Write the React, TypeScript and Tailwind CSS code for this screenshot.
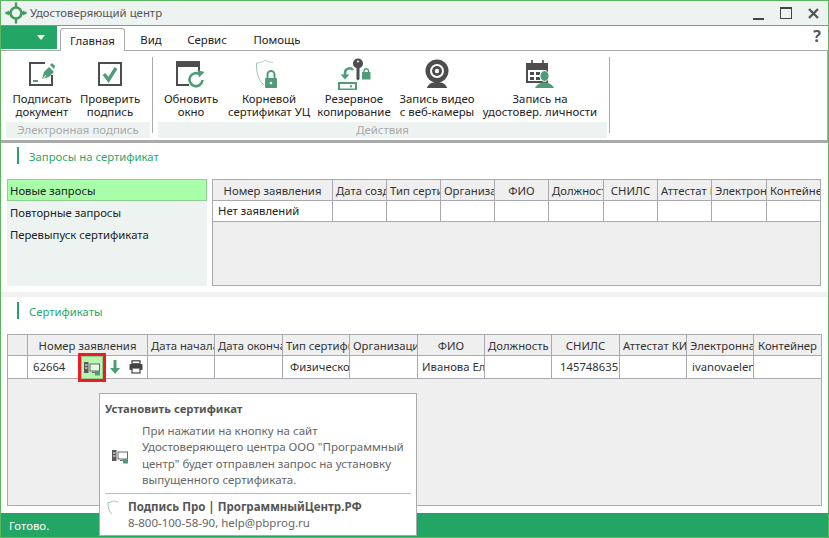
import React from "react";

const G = "#4f9d78";
const D = "#4d4d4d";

function Logo() {
  return (
    <svg width="22" height="22" viewBox="0 0 22 22" fill="none">
      <circle cx="11" cy="11" r="5.5" stroke="#3f9c5c" strokeWidth="2.6" />
      <path d="M11 0.5V6M11 16V21.5M0.5 11H6M16 11H21.5" stroke="#3f9c5c" strokeWidth="2.4" />
      <path d="M0.5 11L4 8.5V13.5ZM21.5 11L18 8.5V13.5Z" fill="#3f9c5c" />
    </svg>
  );
}
function SignIcon() {
  return (
    <svg width="28" height="26" viewBox="0 0 28 26" fill="none">
      <path d="M17 2H2V24H24V14" stroke={D} strokeWidth="2" />
      <path d="M5 20H10" stroke={G} strokeWidth="2" />
      <path d="M14 18L16 11L21 6L26 11L21 16Z" fill={G} />
      <path d="M14 19L18 14" stroke="#fff" strokeWidth="1" />
      <path d="M22 4L24 2L27 5L26 8Z" fill={G} />
    </svg>
  );
}
function CheckIcon() {
  return (
    <svg width="26" height="26" viewBox="0 0 26 26" fill="none">
      <rect x="2" y="2" width="22" height="22" stroke={D} strokeWidth="2" />
      <path d="M7 13L11.5 19L19 7" stroke={G} strokeWidth="3.4" />
    </svg>
  );
}
function RefreshIcon() {
  return (
    <svg width="32" height="28" viewBox="0 0 32 28" fill="none">
      <rect x="1" y="1" width="24" height="6" fill={D} />
      <path d="M2 7V25H14M24 7V11" stroke={D} strokeWidth="2" />
      <path d="M27.5 20A6.5 6.5 0 1 1 25 14.5" stroke={G} strokeWidth="2.6" />
      <path d="M22.5 10L29.5 12L24 17.5Z" fill={G} />
    </svg>
  );
}
function ShieldIcon() {
  return (
    <svg width="28" height="30" viewBox="0 0 28 30" fill="none">
      <path d="M1.5 4C5 4 8 3 10 0.8C12 2.5 15 3.5 18 3.5" stroke="#9dc8b4" strokeWidth="0.8" />
      <path d="M1.5 4C1 12 3 21 9 26" stroke="#8fbfa8" strokeWidth="0.9" />
      <path d="M12.5 19V15.5A3.5 3.5 0 0 1 19.5 15.5V19" stroke={G} strokeWidth="2" />
      <rect x="10" y="19" width="12" height="10" rx="1" fill={G} />
      <circle cx="16" cy="24" r="1.3" fill="#fff" />
    </svg>
  );
}
function BackupIcon() {
  return (
    <svg width="34" height="32" viewBox="0 0 34 32" fill="none">
      <circle cx="21" cy="5.5" r="5" fill={D} />
      <circle cx="21" cy="3.5" r="1" fill="#fff" />
      <path d="M19.5 10H22.5V21L21 22.5L19.5 21Z" fill={D} />
      <path d="M27 14V12.5A2.3 2.3 0 0 1 31.5 12.5V14" stroke={G} strokeWidth="1.4" />
      <rect x="25" y="14" width="8.5" height="7.5" fill={G} />
      <path d="M8 18V15A4.5 4.5 0 0 1 16 12" stroke={G} strokeWidth="2.6" />
      <path d="M3.5 16.5H12.5L8 21.5Z" fill={G} />
      <rect x="2" y="25" width="17" height="6.5" stroke={G} strokeWidth="2" />
      <rect x="13" y="27.3" width="2" height="2" fill={G} />
    </svg>
  );
}
function CamIcon() {
  return (
    <svg width="26" height="30" viewBox="0 0 26 30" fill="none">
      <circle cx="13" cy="12" r="11.5" fill={D} />
      <circle cx="13" cy="12" r="7" fill="#fff" />
      <circle cx="13" cy="12" r="5" fill={D} />
      <circle cx="13" cy="12" r="2.2" fill="#fff" />
      <path d="M3 29C4 25 8 23 13 23C18 23 22 25 23 29Z" fill={D} />
    </svg>
  );
}
function CalIcon() {
  return (
    <svg width="30" height="30" viewBox="0 0 30 30" fill="none">
      <path d="M7 1V8M18 1V8" stroke={D} strokeWidth="1.6" />
      <rect x="1" y="4" width="22" height="20" fill={D} />
      <rect x="3" y="11" width="18" height="11" fill="#fff" />
      <path d="M5 13H9V16H5ZM11 13H15V16H11ZM5 18H9V21H5ZM11 18H15V21H11Z" fill={D} />
      <ellipse cx="19.5" cy="17" rx="4.6" ry="5.4" fill={G} stroke="#fff" strokeWidth="1" />
      <path d="M10 29C12 25 16 23.5 19.5 23.5C23 23.5 27 25 29 29Z" fill={G} />
    </svg>
  );
}
function InstallIcon({ small }: { small?: boolean }) {
  return (
    <svg width="18" height="16" viewBox="0 0 18 16" fill="none">
      <rect x="1" y="2" width="4.5" height="11" fill="#5a5a5a" />
      <path d="M2 5H4.5M2 8H4.5" stroke="#fff" strokeWidth="1" />
      <rect x="7" y="4" width="9.5" height="7" stroke="#666" strokeWidth="1" fill={small ? "#fff" : "#e8f8e8"} />
      <path d="M9 12.5H14" stroke="#666" strokeWidth="1" />
      <rect x="12" y="11" width="5" height="4.5" fill={G} />
    </svg>
  );
}
function DownIcon() {
  return (
    <svg width="12" height="16" viewBox="0 0 12 16" fill="none">
      <path d="M4.5 1H7.5V9H11L6 15L1 9H4.5Z" fill={G} />
    </svg>
  );
}
function PrinterIcon() {
  return (
    <svg width="14" height="14" viewBox="0 0 14 14" fill="none">
      <rect x="3" y="0.8" width="8" height="3" stroke="#444" strokeWidth="1.2" />
      <rect x="0.5" y="4" width="13" height="6" rx="1" fill="#444" />
      <rect x="3" y="8" width="8" height="5" fill="#fff" stroke="#444" strokeWidth="1.2" />
    </svg>
  );
}
function SmallShield() {
  return (
    <svg width="12" height="15" viewBox="0 0 12 15" fill="none">
      <path d="M1 2.5C3 2.5 5 2 6.5 0.7C8 1.6 9.5 2 11 2" stroke="#8fc4ab" strokeWidth="0.9" />
      <path d="M1 2.5C0.8 7 2 11.5 5 14" stroke="#8fc4ab" strokeWidth="0.9" />
    </svg>
  );
}

function RibbonBtn({ w, icon, a, b }: { w: string; icon: React.ReactNode; a: string; b: string }) {
  return (
    <div className={`${w} flex flex-col items-center shrink-0`}>
      <div className="h-[33px] flex items-center justify-center">{icon}</div>
      <div className="text-[11.4px] leading-[13px] text-[#222] text-center whitespace-nowrap mt-[2px]">
        <div>{a}</div>
        <div>{b}</div>
      </div>
    </div>
  );
}

type Col = { w: number; t?: string; left?: boolean; pad?: number };

const reqCols: Col[] = [
  { w: 120, t: "Номер заявления" },
  { w: 54, t: "Дата создания", left: true },
  { w: 54, t: "Тип сертификата", left: true },
  { w: 54, t: "Организация", left: true },
  { w: 54, t: "ФИО" },
  { w: 55, t: "Должность", left: true },
  { w: 54, t: "СНИЛС" },
  { w: 54, t: "Аттестат КИ", left: true },
  { w: 55, t: "Электронная почта", left: true },
  { w: 54, t: "Контейнер", left: true },
];

const certCols: Col[] = [
  { w: 20, pad: 4 },
  { w: 120, t: "Номер заявления", pad: 5 },
  { w: 67, t: "Дата начала действия", left: true, pad: 4 },
  { w: 68, t: "Дата окончания", left: true, pad: 4 },
  { w: 67, t: "Тип сертификата", left: true, pad: 7 },
  { w: 68, t: "Организация", left: true, pad: 4 },
  { w: 67, t: "ФИО", pad: 4 },
  { w: 67, t: "Должность", left: true, pad: 4 },
  { w: 68, t: "СНИЛС", pad: 8 },
  { w: 67, t: "Аттестат КИ", left: true, pad: 4 },
  { w: 67, t: "Электронная почта", left: true, pad: 5 },
  { w: 68, t: "Контейнер", pad: 4 },
];

function Header({ cols }: { cols: Col[] }) {
  return (
    <div className="flex h-[21px] border-b border-[#aaa9b0] shrink-0">
      {cols.map((c, i) => (
        <div
          key={i}
          style={{ width: c.w }}
          className={`shrink-0 overflow-hidden whitespace-nowrap text-[11.3px] leading-[21px] text-[#333] border-r border-[#aaa9b0] bg-[#efefef] ${
            c.left ? "pl-[3px] text-left" : "text-center"
          }`}
        >
          {c.t}
        </div>
      ))}
    </div>
  );
}

const certRow = ["", "62664", "", "", "Физическое лицо", "", "Иванова Елена", "", "145748635", "", "ivanovaelena", ""];

export default function App() {
  return (
    <div className="relative w-[829px] h-[538px] overflow-hidden bg-white border-x border-[#5cb660] font-['Noto_Sans','Open_Sans',sans-serif] flex flex-col">
      {/* Title bar */}
      <div className="h-[26px] shrink-0 bg-[#edf3f1] border-y border-[#5cb660] flex items-center pl-[4px] pr-[9px]">
        <Logo />
        <span className="ml-[3px] text-[11.4px] text-[#555]">Удостоверяющий центр</span>
        <div className="ml-auto flex items-center">
          <div className="w-[11px] h-[2px] bg-[#444] mt-[11px]" />
          <div className="w-[12px] h-[12px] border border-[#444] border-t-2 ml-[16px] -mt-[1px]" />
          <svg className="ml-[16px]" width="11" height="11" viewBox="0 0 11 11" fill="none">
            <path d="M1 1L10 10M10 1L1 10" stroke="#555" strokeWidth="2.4" />
          </svg>
        </div>
      </div>
      {/* Tabs */}
      <div className="h-[25px] shrink-0 flex items-end relative border-b border-[#aaa] bg-white">
        <div className="w-[56px] h-[23px] self-start bg-[#22a565] flex items-center justify-end pr-[12px]">
          <div className="w-0 h-0 border-x-[4px] border-x-transparent border-t-[5px] border-t-white" />
        </div>
        <div className="ml-[3px] w-[65px] h-[23px] -mb-px bg-white border border-b-0 border-[#aaa] rounded-t-[3px] text-center text-[11.4px] leading-[24px] text-[#222]">
          Главная
        </div>
        <div className="w-[52px] h-[22px] text-center text-[11.4px] leading-[23px] text-[#222]">Вид</div>
        <div className="w-[60px] h-[22px] text-center text-[11.4px] leading-[23px] text-[#222]">Сервис</div>
        <div className="w-[80px] h-[22px] text-center text-[11.4px] leading-[23px] text-[#222]">Помощь</div>
        <div className="ml-auto mr-[7px] mb-[4px] self-center text-[16px] font-bold leading-none text-[#555]">?</div>
      </div>
      {/* Ribbon */}
      <div className="h-[92px] shrink-0 border-b-[3px] border-[#aaa] border-r border-r-[#aaa] flex pl-[5px] pt-[6px] bg-white">
        <div className="w-[144px] shrink-0 flex flex-col">
          <div className="flex h-[65px]">
            <RibbonBtn w="w-[72px]" icon={<SignIcon />} a="Подписать" b="документ" />
            <RibbonBtn w="w-[64px]" icon={<CheckIcon />} a="Проверить" b="подпись" />
          </div>
          <div className="h-[16px] bg-[#edf3f1] text-center text-[11.4px] leading-[16px] text-[#aaa]">Электронная подпись</div>
        </div>
        <div className="w-px h-[76px] ml-[2px] bg-[#aaa]" />
        <div className="w-[449px] ml-[5px] shrink-0 flex flex-col">
          <div className="flex h-[65px]">
            <RibbonBtn w="w-[66px]" icon={<RefreshIcon />} a="Обновить" b="окно" />
            <RibbonBtn w="w-[90px]" icon={<ShieldIcon />} a="Корневой" b="сертификат УЦ" />
            <RibbonBtn w="w-[80px]" icon={<BackupIcon />} a="Резервное" b="копирование" />
            <RibbonBtn w="w-[86px]" icon={<CamIcon />} a="Запись видео" b="с веб-камеры" />
            <RibbonBtn w="w-[120px]" icon={<CalIcon />} a="Запись на" b="удостовер. личности" />
          </div>
          <div className="h-[16px] bg-[#edf3f1] text-center text-[11.4px] leading-[16px] text-[#aaa]">Действия</div>
        </div>
        <div className="w-px h-[76px] ml-[2px] bg-[#aaa]" />
      </div>
      {/* Requests section */}
      <div className="h-[149px] shrink-0 flex flex-col bg-white">
        <div className="h-[36px] shrink-0 pl-[16px] pt-[4px] flex items-start">
          <div className="w-[2px] h-[17px] bg-[#22a565]" />
          <div className="ml-[10px] text-[11.3px] leading-[20px] text-[#2aa76a]">Запросы на сертификат</div>
        </div>
        <div className="flex pl-[6px]">
          <div className="w-[200px] h-[107px] bg-[#edf3f1] text-[11.3px] text-[#222]">
            <div className="h-[22px] bg-[#a9ffa9] border border-[#8fd08f] pl-[2px] leading-[21px]">Новые запросы</div>
            <div className="h-[22px] pl-[3px] leading-[23px]">Повторные запросы</div>
            <div className="h-[22px] pl-[3px] leading-[23px]">Перевыпуск сертификата</div>
          </div>
          <div className="ml-[5px] w-[609px] h-[107px] bg-[#efefef] border border-[#aaa9b0]">
            <Header cols={reqCols} />
            <div className="flex h-[21px] border-b border-[#aaa9b0] bg-white w-full">
              {reqCols.map((c, i) => (
                <div
                  key={i}
                  style={{ width: c.w }}
                  className="shrink-0 overflow-hidden whitespace-nowrap border-r border-[#aaa9b0] pl-[5px] text-[11.3px] leading-[20px] text-[#222]"
                >
                  {i === 0 ? "Нет заявлений" : ""}
                </div>
              ))}
            </div>
          </div>
        </div>
      </div>
      <div className="h-[5px] shrink-0 bg-[#f1f1f1]" />
      {/* Certificates */}
      <div className="flex-1 flex flex-col bg-white">
        <div className="h-[37px] shrink-0 pl-[16px] pt-[5px] flex items-start">
          <div className="w-[2px] h-[17px] bg-[#22a565]" />
          <div className="ml-[10px] text-[11.3px] leading-[20px] text-[#2aa76a]">Сертификаты</div>
        </div>
        <div className="ml-[6px] w-[815px] h-[172px] bg-[#efefef] border border-[#aaa9b0]">
          <Header cols={certCols} />
          <div className="flex h-[23px] border-b border-[#aaa9b0] bg-white">
            {certCols.map((c, i) => (
              <div
                key={i}
                style={{ width: c.w, paddingLeft: c.pad }}
                className={`relative shrink-0 whitespace-nowrap border-r border-[#aaa9b0] text-[11.3px] leading-[22px] text-[#333] ${
                  i === 1 ? "" : "overflow-hidden"
                }`}
              >
                {certRow[i]}
                {i === 1 && (
                  <>
                    <div className="absolute left-[50px] top-[-3px] w-[28px] h-[29px] border-[3px] border-[#ed1c24] bg-[#b9f5b0] flex items-center justify-center">
                      <div className="w-[22px] h-[23px] border border-[#8fd08f] flex items-center justify-center">
                        <InstallIcon />
                      </div>
                    </div>
                    <div className="absolute left-[81px] top-[3px]">
                      <DownIcon />
                    </div>
                    <div className="absolute left-[101px] top-[4px]">
                      <PrinterIcon />
                    </div>
                  </>
                )}
              </div>
            ))}
          </div>
        </div>
      </div>
      {/* Status */}
      <div className="h-[24px] shrink-0 bg-[#22a565] pl-[8px] text-[11.4px] leading-[25px] text-white">Готово.</div>
      <div className="h-px shrink-0 bg-[#5cb660]" />
      {/* Tooltip */}
      <div className="absolute left-[98px] top-[393px] w-[318px] h-[143px] bg-white border border-[#aaa] text-[11.5px] text-[#666]">
        <div className="pl-[5px] pt-[6px] leading-[17px] font-bold text-[11.3px] text-[#555]">Установить сертификат</div>
        <div className="flex items-center pl-[11px] mt-[6px]">
          <InstallIcon small />
          <div className="ml-[13px] leading-[16.4px] whitespace-nowrap">
            При нажатии на кнопку на сайт
            <br />
            Удостоверяющего центра ООО "Программный
            <br />
            центр" будет отправлен запрос на установку
            <br />
            выпущенного сертификата.
          </div>
        </div>
        <div className="mx-[5px] mt-[4px] h-px bg-[#bbb]" />
        <div className="flex pl-[7px] pt-[5px]">
          <div className="pt-[1px]">
            <SmallShield />
          </div>
          <div className="ml-[9px] leading-[16px]">
            <div className="font-bold text-[#555]">Подпись Про | ПрограммныйЦентр.РФ</div>
            <div>8-800-100-58-90, help@pbprog.ru</div>
          </div>
        </div>
      </div>
    </div>
  );
}
